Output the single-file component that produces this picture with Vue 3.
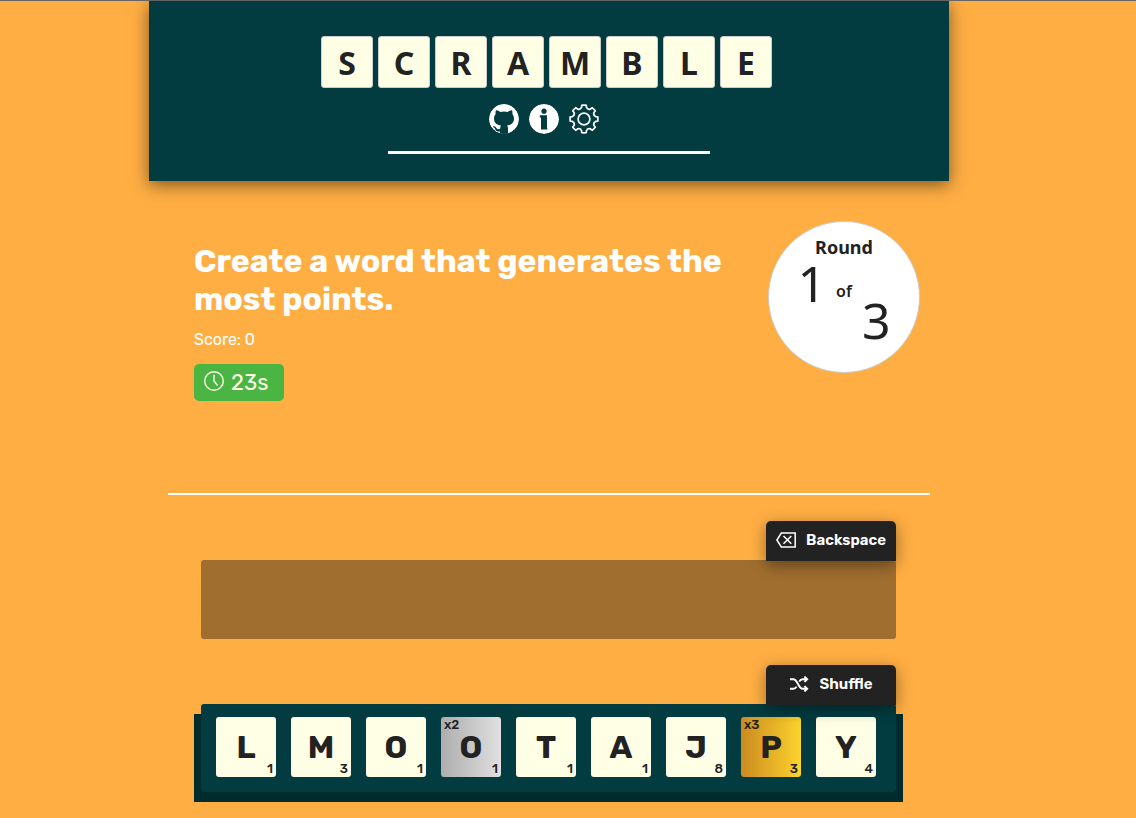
<script setup>
import { ref } from 'vue'

const title = 'SCRAMBLE'.split('')

const tiles = ref([
  { letter: 'L', points: 1 },
  { letter: 'M', points: 3 },
  { letter: 'O', points: 1 },
  { letter: 'O', points: 1, bonus: 2 },
  { letter: 'T', points: 1 },
  { letter: 'A', points: 1 },
  { letter: 'J', points: 8 },
  { letter: 'P', points: 3, bonus: 3 },
  { letter: 'Y', points: 4 },
])

const score = ref(0)
const seconds = ref(23)
const round = ref(1)
const rounds = 3

// Eight-toothed gear outline in a 30 x 30 box.
function gearPath() {
  const at = (r, deg) => {
    const a = (deg * Math.PI) / 180
    return `${(15 + r * Math.sin(a)).toFixed(2)} ${(15 - r * Math.cos(a)).toFixed(2)}`
  }
  let d = ''
  for (let i = 0; i < 8; i++) {
    const t = i * 45
    d += `${i ? 'L' : 'M'}${at(11.8, t - 12)} L${at(14.1, t - 9)} L${at(14.1, t + 9)} L${at(11.8, t + 12)} Q${at(9.8, t + 22.5)} ${at(11.8, t + 33)} `
  }
  return d + 'Z'
}
const gear = gearPath()
</script>

<template>
  <div class="page">
    <header class="header">
      <h1 class="title" aria-label="Scramble">
        <span v-for="(c, i) in title" :key="i" class="title-tile">{{ c }}</span>
      </h1>
      <nav class="links">
        <a href="#source" class="icon-link" aria-label="Source code">
          <svg viewBox="0 0 30 30" width="30" height="30">
            <circle cx="15" cy="15" r="15" fill="#fff" />
            <path
              d="M7 6.200C8.500 6.100 10 7 11.200 7.900Q15 7 18.800 7.900C20 7 21.500 6.100 23 6.200C23.700 7.700 23.500 9 23.300 9.900C24.500 11.300 25 12.800 25 14.600C25 19.200 22.200 21 18 21.500C18.700 22.200 19 23.200 19 24.500V30.500H11V27.500C8.300 28 6.900 26.700 6.200 25.200C5.600 23.900 4.800 23.400 3.900 22.800C4.800 21.900 6.200 22.400 7.200 23.700C8.200 25.300 9.500 25.400 11.100 24.800C11.200 23.300 11.500 22.200 12 21.500C7.800 21 5 19.200 5 14.600C5 12.800 5.500 11.300 6.700 9.900C6.500 9 6.300 7.700 7 6.200Z"
              fill="#023c40"
            />
          </svg>
        </a>
        <button type="button" class="icon-link" aria-label="Information">
          <svg viewBox="0 0 30 30" width="30" height="30">
            <circle cx="15" cy="15" r="15" fill="#fff" />
            <circle cx="15" cy="7.2" r="2.6" fill="#023c40" />
            <path d="M10.800 11.200h7.200v13.200h.5v1.100h-6.500v-12.100h-1.200z" fill="#023c40" />
          </svg>
        </button>
        <button type="button" class="icon-link" aria-label="Settings">
          <svg viewBox="0 0 30 30" width="30" height="30" fill="none" stroke="#fff" stroke-width="1.700" stroke-linejoin="round">
            <path :d="gear" />
            <circle cx="15" cy="15" r="5.900" />
          </svg>
        </button>
      </nav>
      <hr class="header-rule" />
    </header>

    <main class="game">
      <section class="status">
        <div class="brief">
          <h2 class="prompt">Create a word that generates the most points.</h2>
          <p class="score">Score: {{ score }}</p>
          <div class="timer">
            <svg viewBox="0 0 20 20" width="20" height="20" fill="none" stroke="#ffffe6" stroke-width="1.400" stroke-linecap="round">
              <circle cx="10" cy="10" r="9.300" />
              <path d="M10 4.200V10l3.400 4.200" />
            </svg>
            <span>{{ seconds }}s</span>
          </div>
        </div>
        <div class="round">
          <div class="round-label">Round</div>
          <div class="round-count">
            <span class="num">{{ round }}</span>
            <span class="of">of</span>
            <span class="num total">{{ rounds }}</span>
          </div>
        </div>
      </section>

      <hr class="rule" />

      <section class="board">
        <button type="button" class="action">
          <svg viewBox="0 0 20 16" width="20" height="16" fill="none" stroke="#fff" stroke-width="1.500">
            <path d="M5.300 1H19.200V15H5.300L.9 8z" />
            <path d="M7.500 4l7.800 7.800M15.300 4L7.500 11.800" />
          </svg>
          Backspace
        </button>
        <div class="slot" aria-label="Your word"></div>

        <button type="button" class="action">
          <svg viewBox="0 0 20 16" width="20" height="16" fill="none" stroke="#fff" stroke-width="1.900">
            <path d="M1 3.200h3.200c4.800 0 4.800 9.600 9.600 9.600H18M1 12.800h3.200c1.600 0 2.700-.9 3.400-2.200M10.200 5.600C11 4 12 3.200 13.800 3.200H18" />
            <path d="M15.400.5l2.800 2.700-2.800 2.700M15.400 10.100l2.800 2.700-2.800 2.700" />
          </svg>
          Shuffle
        </button>
        <div class="rack">
          <button
            v-for="(t, i) in tiles"
            :key="i"
            type="button"
            class="tile"
            :class="{ double: t.bonus === 2, triple: t.bonus === 3 }"
          >
            <span v-if="t.bonus" class="bonus">x{{ t.bonus }}</span>
            <span>{{ t.letter }}</span>
            <span class="points">{{ t.points }}</span>
          </button>
        </div>
      </section>
    </main>
  </div>
</template>

<style>
body {
  background: #ffae43;
}
</style>

<style scoped>
.page {
  box-sizing: border-box;
  min-height: 100vh;
  padding: 0 38px 16px 0;
  border-top: 1px solid #666;
  overflow: hidden;
  background: #ffae43;
  color: #222;
  font-family: Rubik, Roboto, sans-serif;
}

button {
  margin: 0;
  border: 0;
  font-family: inherit;
  cursor: pointer;
}

.header {
  box-sizing: border-box;
  max-width: 800px;
  margin: 0 auto;
  padding: 35px 20px 27px;
  background: #023c40;
  box-shadow: 0 4px 16px rgba(0, 0, 0, 0.5);
}

.title {
  display: flex;
  justify-content: center;
  margin: 0;
}

.title-tile {
  box-sizing: border-box;
  width: 52px;
  height: 52px;
  margin-right: 5px;
  border: 1px solid #ccc;
  border-radius: 3px;
  background: #ffffe6;
  font: 700 32px/52px "Segoe UI", "Noto Sans", sans-serif;
  text-align: center;
}

.links {
  display: flex;
  justify-content: center;
  margin-top: 16px;
}

.icon-link {
  width: 30px;
  height: 30px;
  margin-right: 10px;
  padding: 0;
  border-radius: 50%;
  background: none;
  overflow: hidden;
}

.icon-link svg {
  display: block;
}

.header-rule {
  width: 322px;
  max-width: 100%;
  height: 3px;
  margin: 17px auto 0;
  border: 0;
  background: #fff;
}

.game {
  max-width: 762px;
  margin: 0 auto;
}

.status {
  display: flex;
  justify-content: space-between;
  align-items: flex-start;
  min-height: 312px;
  padding: 40px 10px 0 26px;
  box-sizing: border-box;
}

.brief {
  flex: 1;
  max-width: 550px;
  padding-top: 21px;
}

.prompt {
  margin: 0;
  color: #fff;
  font-size: 32px;
  font-weight: 700;
  line-height: 38px;
}

.score {
  margin: 12px 0 14px;
  color: #fff;
  font-size: 16px;
  line-height: 20px;
}

.timer {
  display: inline-flex;
  align-items: center;
  gap: 7px;
  box-sizing: border-box;
  min-width: 90px;
  height: 37px;
  padding: 0 10px;
  border-radius: 5px;
  background: #4bb543;
  color: #ffffe6;
  font-size: 22px;
}

.timer svg {
  margin-bottom: 3px;
}

.round {
  box-sizing: border-box;
  width: 152px;
  height: 152px;
  padding-top: 14px;
  border: 1px solid #ccc;
  border-radius: 50%;
  background: #fff;
  font-family: "Segoe UI", "Noto Sans", sans-serif;
  text-align: center;
}

.round-label {
  font-size: 18px;
  font-weight: 700;
  line-height: 22px;
}

.round-count {
  display: flex;
  justify-content: center;
  align-items: flex-start;
  gap: 10px;
}

.num {
  font-size: 50px;
  line-height: 50px;
}

.of {
  font-size: 16px;
  font-weight: 600;
  line-height: 66px;
}

.total {
  padding-top: 37px;
}

.rule {
  height: 2px;
  margin: 0;
  border: 0;
  background: #fff;
}

.board {
  display: flex;
  flex-direction: column;
  padding: 26px 34px 0 33px;
}

.action {
  position: relative;
  z-index: 1;
  display: flex;
  justify-content: center;
  align-items: center;
  gap: 10px;
  align-self: flex-end;
  width: 130px;
  height: 40px;
  margin-bottom: -1px;
  padding: 0 0 3px;
  border-radius: 5px 5px 0 0;
  background: #222;
  box-shadow: 0 4px 16px rgba(0, 0, 0, 0.4);
  color: #fff;
  font-size: 15px;
  font-weight: 600;
}

.slot {
  height: 79px;
  margin-bottom: 26px;
  border-radius: 3px;
  background: #a06e2f;
}

.rack {
  position: relative;
  isolation: isolate;
  display: flex;
  gap: 15px;
  box-sizing: border-box;
  min-height: 88px;
  padding: 13px 15px 15px;
}

/* Rack face and the darker base below it */
.rack::before,
.rack::after {
  content: "";
  position: absolute;
}

.rack::before {
  inset: 10px -7px -10px;
  z-index: -2;
  background: #002c2e;
}

.rack::after {
  inset: 0;
  z-index: -1;
  border-radius: 3px;
  background: #023c40;
}

.tile {
  position: relative;
  flex: 0 0 60px;
  height: 60px;
  padding: 0;
  border-radius: 3px;
  background: #ffffe6;
  color: #222;
  font-size: 32px;
  font-weight: 700;
  line-height: 60px;
}

.double {
  background: linear-gradient(90deg, #adadad, #e0e0e0);
}

.triple {
  background: linear-gradient(90deg, #cb8b20, #fdd32e);
}

.bonus,
.points {
  position: absolute;
  font-size: 13px;
  font-weight: 500;
  line-height: 16px;
}

.bonus {
  top: 0;
  left: 3px;
}

.points {
  right: 3px;
  bottom: 0;
}
</style>
